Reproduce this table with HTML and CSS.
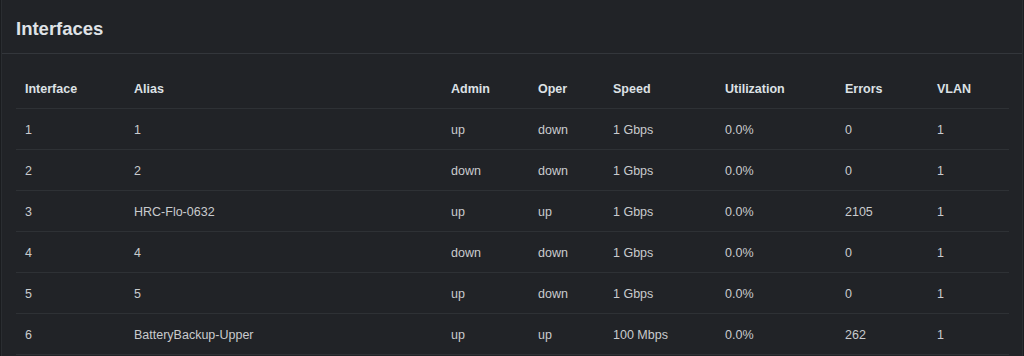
FILE: index.html
```html
<!DOCTYPE html>
<html>
<head>
<meta charset="utf-8">
<link rel="stylesheet" href="styles.css">
</head>
<body>
<div class="card">
  <div class="card-header"><h2 class="title">Interfaces</h2></div>
  <div class="card-body">
    <table class="ifaces">
      <colgroup>
        <col class="c-if"><col class="c-alias"><col class="c-admin"><col class="c-oper"><col class="c-speed"><col class="c-util"><col class="c-err"><col class="c-vlan">
      </colgroup>
      <thead>
        <tr><th>Interface</th><th>Alias</th><th>Admin</th><th>Oper</th><th>Speed</th><th>Utilization</th><th>Errors</th><th>VLAN</th></tr>
      </thead>
      <tbody>
        <tr><td>1</td><td>1</td><td>up</td><td>down</td><td>1 Gbps</td><td>0.0%</td><td>0</td><td>1</td></tr>
        <tr><td>2</td><td>2</td><td>down</td><td>down</td><td>1 Gbps</td><td>0.0%</td><td>0</td><td>1</td></tr>
        <tr><td>3</td><td>HRC-Flo-0632</td><td>up</td><td>up</td><td>1 Gbps</td><td>0.0%</td><td>2105</td><td>1</td></tr>
        <tr><td>4</td><td>4</td><td>down</td><td>down</td><td>1 Gbps</td><td>0.0%</td><td>0</td><td>1</td></tr>
        <tr><td>5</td><td>5</td><td>up</td><td>down</td><td>1 Gbps</td><td>0.0%</td><td>0</td><td>1</td></tr>
        <tr><td>6</td><td>BatteryBackup-Upper</td><td>up</td><td>up</td><td>100 Mbps</td><td>0.0%</td><td>262</td><td>1</td></tr>
      </tbody>
    </table>
  </div>
</div>
</body>
</html>
```

FILE: styles.css
```css
html, body {
  margin: 0;
  padding: 0;
  background: #1a1c1f;
  font-family: "Liberation Sans", Arial, sans-serif;
  overflow: hidden;
}
.card {
  box-sizing: border-box;
  margin-left: 1px;
  width: 1022px;
  height: 356px;
  overflow: hidden;
  border: 1px solid #2a2d31;
  border-top: none;
  border-bottom: none;
  background: #212327;
}
.card-header {
  height: 53px;
  border-bottom: 1px solid #33363b;
  display: flex;
  align-items: center;
  padding-left: 14px;
}
.title {
  margin: 0;
  font-size: 18.5px;
  font-weight: bold;
  color: #dfe2e6;
  padding-top: 5px;
}
.card-body {
  padding: 14px 13px 0 14px;
}
.ifaces {
  width: 993px;
  border-collapse: collapse;
  table-layout: fixed;
  font-size: 12.5px;
}
.c-if { width: 109px; }
.c-alias { width: 317px; }
.c-admin { width: 87px; }
.c-oper { width: 75px; }
.c-speed { width: 112px; }
.c-util { width: 120px; }
.c-err { width: 92px; }
.c-vlan { width: 81px; }
.ifaces th, .ifaces td {
  text-align: left;
  padding: 2px 0 0 9px;
  height: 38px;
  border-bottom: 1px solid #2e3135;
  white-space: nowrap;
}
.ifaces th {
  color: #dde1e5;
  font-weight: bold;
}
.ifaces td {
  color: #c9cbce;
}
```
